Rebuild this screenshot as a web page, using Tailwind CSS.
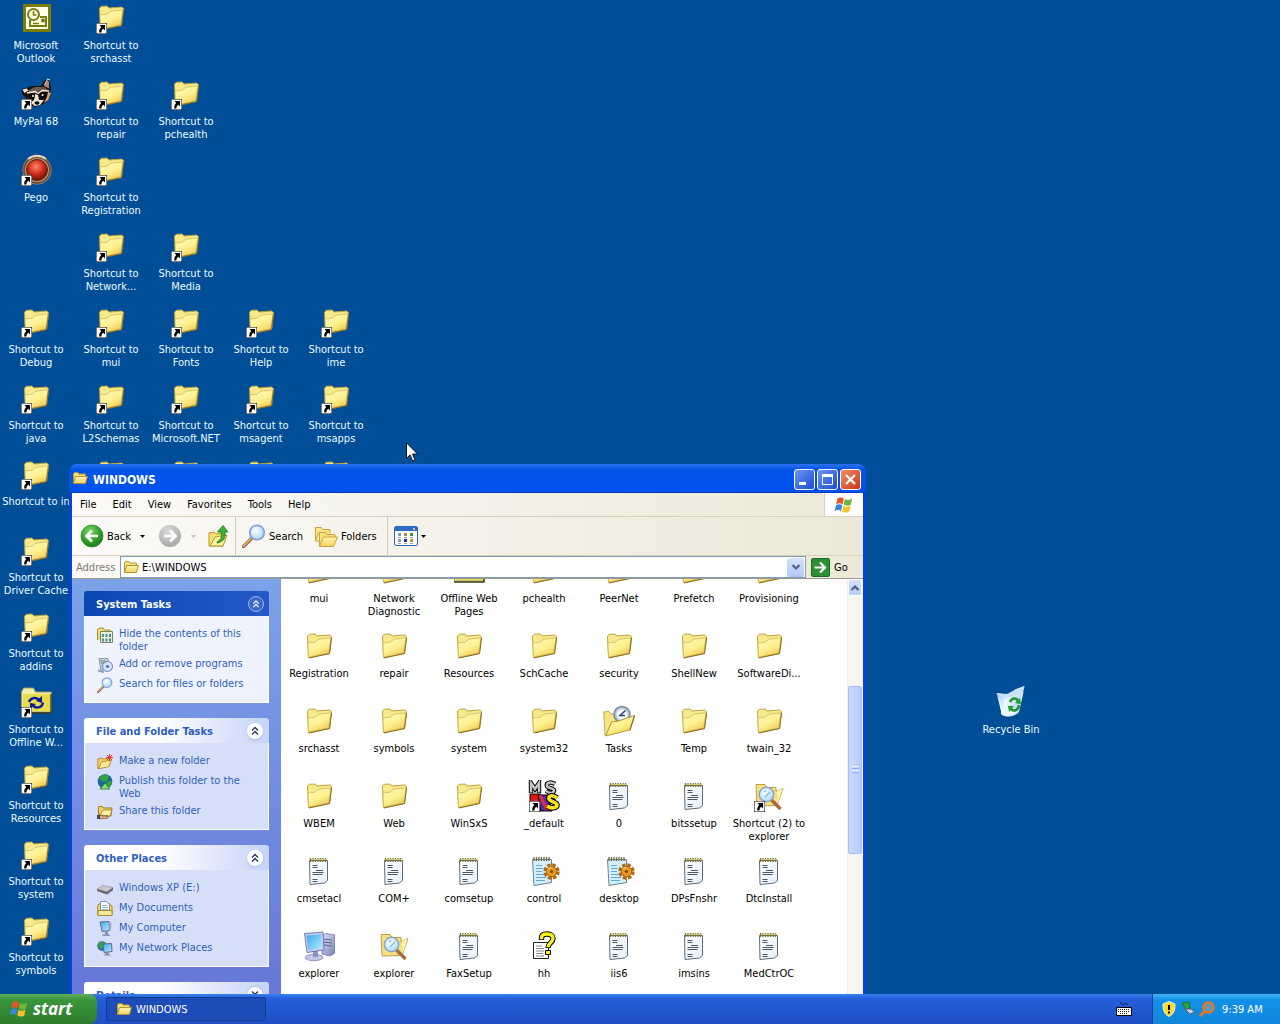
<!DOCTYPE html>
<html lang="en">
<head>
<meta charset="UTF-8">
<meta name="viewport" content="width=device-width, initial-scale=1.0">
<title>WINDOWS</title>
<script src="https://cdn.jsdelivr.net/npm/@tailwindcss/browser@4"></script>
</head>
<body class="h-screen flex flex-col overflow-hidden bg-[#004e98] font-['DejaVu_Sans_Condensed','Noto_Sans',sans-serif] text-[11px] leading-[13px] text-black cursor-default">

<!-- Icon sprite -->
<svg class="absolute size-0" aria-hidden="true">
    <defs>
        <linearGradient id="gFolder" x1="0" y1="0" x2="0.6" y2="1"><stop offset="0" stop-color="#fffcc8"/><stop offset="0.6" stop-color="#fdf08e"/><stop offset="1" stop-color="#f2cc58"/></linearGradient>
        <linearGradient id="gOpen" x1="0" y1="0" x2="0" y2="1"><stop offset="0" stop-color="#fff6b0"/><stop offset="1" stop-color="#f6d064"/></linearGradient>
        <linearGradient id="gScreen" x1="0" y1="0" x2="1" y2="1"><stop offset="0" stop-color="#3fa8f0"/><stop offset="1" stop-color="#b0ecff"/></linearGradient>
        <linearGradient id="gGrey" x1="0" y1="0" x2="1" y2="1"><stop offset="0" stop-color="#dfe2f4"/><stop offset="1" stop-color="#7780b4"/></linearGradient>
        <linearGradient id="gPage" x1="0" y1="0" x2="1" y2="1"><stop offset="0" stop-color="#ffffff"/><stop offset="1" stop-color="#e4eefa"/></linearGradient>
        <linearGradient id="gBin" x1="0" y1="0" x2="1" y2="0.6"><stop offset="0" stop-color="#7db8f0"/><stop offset="0.5" stop-color="#e9f6ff"/><stop offset="1" stop-color="#a9cdf2"/></linearGradient>
        <radialGradient id="gRed" cx="0.45" cy="0.35" r="0.6"><stop offset="0" stop-color="#ff8468"/><stop offset="0.6" stop-color="#cc2c18"/><stop offset="1" stop-color="#7a140c"/></radialGradient>
        <radialGradient id="gGreen" cx="0.4" cy="0.3" r="0.7"><stop offset="0" stop-color="#7ed66c"/><stop offset="0.6" stop-color="#34a42c"/><stop offset="1" stop-color="#1c7a1c"/></radialGradient>
        <radialGradient id="gSilver" cx="0.4" cy="0.3" r="0.7"><stop offset="0" stop-color="#dcdcdc"/><stop offset="1" stop-color="#a8a8a8"/></radialGradient>
        <radialGradient id="gLens" cx="0.4" cy="0.35" r="0.7"><stop offset="0" stop-color="#ffffff"/><stop offset="1" stop-color="#a4d8f8"/></radialGradient>
    </defs>

    <symbol id="folder" viewBox="0 0 32 32">
        <path d="M5.5 27.5 4.5 6 6.5 4.3 12 4 14 6 26.500 5l2 1.600-2 16.800z" fill="#f8ea8c" stroke="#bfa23a"/>
        <path d="M5.500 27.200 5 13 12 12.200 16 9.200 28 7.800 25.800 22.800z" fill="url(#gFolder)" stroke="#cdb24a" stroke-width="0.700"/>
        <path d="M6 28 26.500 23.600 28.600 8" fill="none" stroke="#8a6e24"/>
    </symbol>

    <symbol id="openfolder" viewBox="0 0 16 16">
        <path d="M1.500 13V4l1-1.500H6L7 4h6.500v3.500" fill="#f8e27c" stroke="#b8922c"/>
        <path d="M1.500 13.500 3.600 6.500h11.800l-2 7z" fill="url(#gOpen)" stroke="#b8922c"/>
    </symbol>

    <symbol id="arrow" viewBox="0 0 11 11">
        <path d="M0 0h11v11H0z" fill="#fff" stroke="#000"/>
        <path d="M3.500 2H9v5.500L7.300 5.800C6 6.800 5.500 7.800 5.400 9.500H3.200C3 7 4 5.200 5.300 3.900z" fill="#000"/>
    </symbol>

    <symbol id="notepad" viewBox="0 0 32 32">
        <path d="M6.500 5.500h18v20l-3 2.500L7 29.500z" fill="url(#gPage)" stroke="#5f6c76"/>
        <path d="M7.500 3v4M10 3v4M12.500 3v4M15 3v4M17.500 3v4M20 3v4M22.500 3v4" stroke="#77723a" stroke-width="1.300"/>
        <path d="M8 4.500h16" stroke="#d9c96e"/>
        <path d="M9.500 10.500h5M9.500 12.500h5M13 15.500h7M9.500 17.500h11M9.500 19.500h10M9.500 24.500h5M9.500 26.500h5" stroke="#4d5862"/>
    </symbol>

    <symbol id="config" viewBox="0 0 32 32">
        <path d="M4.500 4.500h19v23L6 30.500z" fill="#d4effc" stroke="#6f8290"/>
        <path d="M6 2v4M8.500 2v4M11 2v4M13.500 2v4M16 2v4M18.500 2v4M21 2v4" stroke="#6e6a40" stroke-width="1.300"/>
        <path d="M8 10.500h6M8 13.500h7M8 16.500h6M8 19.500h8M8 22.500h10M8 25.500h9" stroke="#62a8d8"/>
        <circle cx="23.500" cy="16.500" r="6.200" fill="none" stroke="#b06a10" stroke-width="4" stroke-dasharray="3.200 1.670"/>
        <circle cx="23.500" cy="16.500" r="5.200" fill="#e69a20" stroke="#a86410"/>
        <circle cx="23.500" cy="16.500" r="1.600" fill="#7a4a10"/>
        <path d="M20 14l3-2" stroke="#ffd468" stroke-width="1.500"/>
    </symbol>

    <symbol id="explorer" viewBox="0 0 32 32">
        <path d="M19 6l4-2.500 9 1.500v18l-5 3-8-2z" fill="url(#gGrey)" stroke="#646ca0" stroke-width="0.700"/>
        <path d="M21 9l8 1M21 12l8 1M21 15l8 1" stroke="#5c6498"/>
        <ellipse cx="11" cy="27.500" rx="9" ry="3.200" fill="#c2c8e6" stroke="#7078aa" stroke-width="0.700"/>
        <path d="M10 20h5v7h-5z" fill="#8c94c4"/>
        <path d="M1.500 3.500 20 2l1 18-17 2.500z" fill="#c6cdec" stroke="#5a62a0" stroke-width="0.800"/>
        <path d="M3.500 5.500 18 4.200l.8 14L5.200 20.300z" fill="url(#gScreen)"/>
    </symbol>

    <symbol id="searchfolder" viewBox="0 0 32 32">
        <path d="M4 26 3 4.500h9l2 3h9v4l7-3-6 17z" fill="#f8e080" stroke="#b08c2c" stroke-width="0.800"/>
        <path d="M24 11l5.500-2.300-5 15.300z" fill="#fff6b4"/>
        <path d="m18.500 20 9 9" stroke="#a86c3c" stroke-width="3.400"/>
        <circle cx="13.500" cy="14.500" r="7.200" fill="url(#gLens)" stroke="#8ca4c4" stroke-width="1.500"/>
        <path d="M11 12l2-1.500M12 17l5-5" stroke="#6cb8e8" stroke-width="1.200"/>
    </symbol>

    <symbol id="help" viewBox="0 0 32 32">
        <path d="M5.500 12.500h15v16h-15z" fill="#fff" stroke="#222"/>
        <path d="M8 16h6M8 18.500h8M8 21h8M8 23.500h7M8 26h8" stroke="#888"/>
        <path d="M13.500 10V8c0-3 2-4 5.500-4s6 1.500 6 4.500c0 4-5 4.500-5 9.500" fill="none" stroke="#000" stroke-width="5.400"/>
        <path d="M13.500 9.200V8c0-3 2-4 5.500-4s6 1.500 6 4.500c0 4-5 4.500-5 8.700" fill="none" stroke="#f8f020" stroke-width="3.400"/>
        <path d="M17.500 20.500h5v4h-5z" fill="#f8f020" stroke="#000"/>
    </symbol>

    <symbol id="tasks" viewBox="0 0 32 32">
        <path d="M2 30 .8 7l5-.8 2 2.500 10 2v10z" fill="#f8e484" stroke="#b8982c" stroke-width="0.800"/>
        <circle cx="19" cy="9.500" r="8" fill="#b4c8d8" stroke="#74889c" stroke-width="1.500"/>
        <circle cx="19" cy="9.500" r="5.500" fill="#f4faff"/>
        <path d="m22.500 5.500-5.500 5h5" fill="none" stroke="#304860" stroke-width="1.500"/>
        <path d="M2.500 31 8.500 17l7-1 16-5.500-5 14.500z" fill="url(#gFolder)" stroke="#b08c2c" stroke-width="0.900"/>
        <path d="m27 25.500 4.500-14.500" stroke="#7c6420"/>
    </symbol>

    <symbol id="offline" viewBox="0 0 32 32">
        <path d="M1.500 26V6l2-4h10l2 4h16v20z" fill="#f0ecb0" stroke="#9c9850"/>
        <path d="M31 8v19H1" fill="none" stroke="#3a3a10" stroke-width="1.400"/>
        <path d="M3 8h27v17H3z" fill="#e8dc4c"/>
        <path d="M9 16c2-5 8-5 10-2M23 16.500c-1 6-8 6-10 3" fill="none" stroke="#0c1c9c" stroke-width="2.400"/>
        <path d="m16 15 6 2v-7zM16 18l-6-1v6z" fill="#0c1c9c"/>
    </symbol>

    <symbol id="default" viewBox="0 0 32 32">
        <path d="M3 13V3l4 6 4-6v10" fill="none" stroke="#000" stroke-width="4.400"/>
        <path d="M3 12.500V3l4 6 4-6v9.500" fill="none" stroke="#c4c4c4" stroke-width="2.400"/>
        <path d="M27 4c-5-3-9-1-8 2s8 2 7 5-5 2-8 0" fill="none" stroke="#000" stroke-width="4.400"/>
        <path d="M27 4c-5-3-9-1-8 2s8 2 7 5-5 2-8 0" fill="none" stroke="#c4c4c4" stroke-width="2.400"/>
        <path d="M2 14h11v17H2z" fill="#d81c1c" stroke="#000"/>
        <path d="M10 15h10l4 16H13z" fill="#5a28b4" stroke="#000"/>
        <path d="M12 15l7 15" stroke="#e03030" stroke-width="3"/>
        <path d="M29 18c-5-4-9-2-8 1s8 3 8 6-6 4-10 1" fill="none" stroke="#000" stroke-width="5.600"/>
        <path d="M29 18c-5-4-9-2-8 1s8 3 8 6-6 4-10 1" fill="none" stroke="#f8e01c" stroke-width="3.600"/>
    </symbol>

    <symbol id="outlook" viewBox="0 0 32 32">
        <path d="M3 2h28v28H3z" fill="#7c7c08"/>
        <path d="M6 5h22v22H6z" fill="#fffff0"/>
        <circle cx="13.500" cy="12.500" r="5.500" fill="#fffff0" stroke="#7c7c08" stroke-width="2"/>
        <path d="M13.500 9v4h3" fill="none" stroke="#7c7c08" stroke-width="1.600"/>
        <path d="M10 18v6h16v-9h-6" fill="none" stroke="#7c7c08" stroke-width="2"/>
        <path d="M13 21.500h6M22 17.500h2v2h-2z" stroke="#7c7c08" stroke-width="1.600"/>
    </symbol>

    <symbol id="raccoon" viewBox="0 0 32 32">
        <path d="M2 11l4-1 6-2 9 0 4-6 4-1 2 9-1 9-6 7-9 3-8-4-2-6-3-3z" fill="#1c1410"/>
        <path d="M24 8l3-5.500 2 1 0 7z" fill="#a8887c"/>
        <path d="M24.500 7l3-6 2.500 1" fill="none" stroke="#f0dccc"/>
        <path d="M2.500 11.500l4-1 2 2-4 2.500z" fill="#f0e0d0"/>
        <path d="M9 12l6-3 9 0 4 3-7 0-5 3-7 0z" fill="#6c5c50"/>
        <path d="M7 15l8-1.500 3 2 4-3 7 .5" fill="none" stroke="#f4ece4" stroke-width="1.400"/>
        <path d="M15 16l3 1 1 5 5 0-4 5-5 1-4-3 3-4z" fill="#ece4dc"/>
        <path d="M9 16l6 1-1 5-4 2zM20 15l7-1-1 6-5 1z" fill="#0c0808"/>
        <circle cx="13" cy="18" r="1" fill="#fff"/><circle cx="22.500" cy="17" r="1" fill="#fff"/>
        <ellipse cx="17" cy="25" rx="2.500" ry="1.800" fill="#0c0808"/>
        <path d="M28 14l3 1-3 7-4 3 3-6z" fill="#e8a868"/>
    </symbol>

    <symbol id="pego" viewBox="0 0 32 32">
        <circle cx="17" cy="16" r="14.500" fill="#c49872"/>
        <circle cx="17" cy="16" r="13" fill="none" stroke="#6c5040" stroke-width="2"/>
        <path d="M8 5a14 14 0 0 1 18 0" fill="none" stroke="#f2d8b8" stroke-width="2"/>
        <circle cx="17" cy="16" r="10.500" fill="url(#gRed)" stroke="#5a1c10"/>
    </symbol>

    <symbol id="bin" viewBox="0 0 32 32">
        <path d="M1.500 7 12 9l9-6 8.500-3-5.500 26c-4 5-12 6-17 3z" fill="url(#gBin)"/>
        <path d="M1.500 7 12 8l8-4 9.500-4-2 5-9 6-10 1z" fill="#c8e2fa"/>
        <path d="M4 12l3 15M10 13l1 8M28 6l-4 18" stroke="#fff" stroke-opacity="0.700"/>
        <path d="M6 26c4-5 14-6 18-2-3 6-13 8-18 4z" fill="#eaf7ff"/>
        <path d="M15 16c2-5 7-4 8-1M24 19c0 5-5 7-8 4" fill="none" stroke="#1e9a28" stroke-width="2.600"/>
        <path d="m20 17 6 1-1-6zM19 20l-6 0 1 6z" fill="#1e9a28"/>
    </symbol>

    <symbol id="flag" viewBox="0 0 20 20">
        <path d="M3.500 3.500C6 2 8 2.300 9.800 3.500L8.600 9.200C6.500 8 4.500 8 2.200 9.300z" fill="#e8542c"/>
        <path d="M10.800 4c2.200 1.200 4.700 1.200 7.400-.2L16.800 9.700c-2.500 1.300-4.900 1.200-7-.1z" fill="#72b43c"/>
        <path d="M2 10.300c2.200-1.300 4.200-1.200 6.300-.1L7 15.900c-2-1.100-4-1.200-6.400.1z" fill="#3c84d8"/>
        <path d="M9.500 10.800c2.200 1.200 4.500 1.200 7 0l-1.300 5.900c-2.500 1.200-4.900 1.200-7-.1z" fill="#f6c22c"/>
    </symbol>

    <symbol id="magnifier" viewBox="0 0 24 24">
        <path d="m9.500 14.500-8 8" stroke="#8a6858" stroke-width="3.600" stroke-linecap="round"/>
        <path d="m9 14.500-7.500 7.500" stroke="#e8a868" stroke-width="1.800" stroke-linecap="round"/>
        <circle cx="15" cy="8.500" r="7.200" fill="url(#gLens)" stroke="#8ca0e0" stroke-width="1.800"/>
    </symbol>

    <symbol id="up" viewBox="0 0 24 24">
        <path d="M2 22V9l5-1 2 2 8-1-1 13z" fill="#f6e070" stroke="#b49828"/>
        <path d="m3 22 5-9 12-2-4 11z" fill="#fff2a0" stroke="#b49828"/>
        <path d="M10 18c5-3 5-6 4-10h-3.500L16 1.500 21 8h-3c1 6-2 10-8 11z" fill="#3cb034" stroke="#187818" stroke-width="0.800"/>
    </symbol>

    <symbol id="folders" viewBox="0 0 24 24">
        <path d="M1.500 17V3.500h6l1.500 2h7V9" fill="#f8e684" stroke="#c8a440"/>
        <path d="m1.500 17 3-8.500h1v8.500z" fill="#fff0a0" stroke="#c8a440"/>
        <path d="M5.500 22.500V8.500h6l1.500 2h8V13" fill="#f8e07c" stroke="#c8a440"/>
        <path d="m5.500 22.500 4-9.500h14l-4 9.500z" fill="url(#gOpen)" stroke="#c8a440"/>
    </symbol>

    <symbol id="views" viewBox="0 0 24 20">
        <rect x="0.500" y="0.500" width="23" height="19" rx="1.500" fill="#fff" stroke="#2c68b8"/>
        <path d="M1 1h22v4H1z" fill="#2c6cc8"/><path d="M19 2h2v2h-2z" fill="#f4b0a0"/>
        <path d="M4 7h3v3H4zM4 13h3v3H4z" fill="#8c9cb8"/>
        <path d="M10 7h3v3h-3z" fill="#a08858"/><path d="M10 13h3v3h-3z" fill="#18389c"/>
        <path d="M16 7h3v3h-3z" fill="#389c38"/><path d="M16 13h3v3h-3z" fill="#c89038"/>
        <path d="M4 11.500h3M4 17.500h3M10 11.500h3M10 17.500h3M16 11.500h3M16 17.500h3" stroke="#666" stroke-width="0.600"/>
    </symbol>

    <symbol id="chevron" viewBox="0 0 16 16">
        <path d="m5 7.500 3-3 3 3M5 11.500l3-3 3 3" fill="none" stroke="currentColor" stroke-width="1.400"/>
    </symbol>
    <symbol id="caret" viewBox="0 0 5 3"><path d="M0 0h5L2.500 3z" fill="currentColor"/></symbol>

    <symbol id="s-hide" viewBox="0 0 16 16">
        <path d="M.5 13V2.500L2 1h4l1.500 2H13v9" fill="#f4dc74" stroke="#a88830"/>
        <path d="M3.500 4.500h12v11h-12z" fill="#e8eed8" stroke="#788468"/>
        <path d="M5 7h2v3H5zM8.500 7h2v3h-2zM12 7h2v3h-2zM5 11.500h2v3H5zM8.500 11.500h2v3h-2zM12 11.500h2v3h-2z" fill="#4c8c94"/>
    </symbol>
    <symbol id="s-programs" viewBox="0 0 16 16">
        <path d="M2 1.500h9l1 10-8 2z" fill="#c8d4e8" stroke="#7484a0" stroke-width="0.800"/>
        <path d="M3 3h6v4H4z" fill="#8cb4a4"/>
        <circle cx="10.500" cy="9.500" r="5" fill="#d8e4fc" stroke="#6880b8"/>
        <circle cx="10.500" cy="9.500" r="1.600" fill="#5870b0"/>
        <path d="M1 13.500l6 1.500" stroke="#98a0b0" stroke-width="2"/>
    </symbol>
    <symbol id="s-new" viewBox="0 0 16 16">
        <path d="M.8 14.500V5l4-1 2 1 6-1v7z" fill="#f4d060" stroke="#a87c20" stroke-width="0.800"/>
        <path d="m1.500 14.800 3-7 10-1.500-3 6.500z" fill="#ffe898" stroke="#a87c20" stroke-width="0.800"/>
        <path d="M12.500 0v7M9 3.500h7M10 1l5 5M15 1l-5 5" stroke="#e83820"/>
    </symbol>
    <symbol id="s-web" viewBox="0 0 16 16">
        <circle cx="8" cy="7.500" r="7.300" fill="#1c64a4"/>
        <path d="M2 4c3-4 8-4 10-1l-2 4-4 1zM9 9l5-3 1 4-4 4z" fill="#34a438"/>
        <path d="m3 15 5-6 5 6z" fill="#8ce070" stroke="#1c6c28" stroke-width="0.800"/>
    </symbol>
    <symbol id="s-share" viewBox="0 0 16 16">
        <path d="M1.500 10.500v-8h4l1 1.500h8.500l-1 8z" fill="#f4d468" stroke="#a07c28"/>
        <path d="m3 11 3-5h9l-2 6z" fill="#fff0a8" stroke="#a07c28" stroke-width="0.800"/>
        <path d="M0 12c3-2 5 1 11 0v2c-5 1-8 1-11 0z" fill="#e4b484" stroke="#6c4c28" stroke-width="0.700"/>
        <path d="M0 11h3v4H0z" fill="#384868"/>
    </symbol>
    <symbol id="s-drive" viewBox="0 0 16 16">
        <path d="m0 8 6-3.500 10 2-6 4.500z" fill="#c8c8cc" stroke="#888890" stroke-width="0.600"/>
        <path d="m0 8 10 3v2.500L0 10zM10 11l6-4.500V9l-6 4.500z" fill="#66666e"/>
    </symbol>
    <symbol id="s-docs" viewBox="0 0 16 16">
        <path d="M.8 14V4L3 2.500h9L15 5v9z" fill="#f4d868" stroke="#a88830"/>
        <path d="M3.500.5h6l3 3V10h-9z" fill="#fff" stroke="#7890b8"/>
        <path d="M5 4.500h5M5 6.500h6M5 8.500h6" stroke="#98b0d8"/>
        <path d="M1 9.500h14v5H1z" fill="#fae890" stroke="#a88830"/>
    </symbol>
    <symbol id="s-computer" viewBox="0 0 16 16">
        <path d="M3 1l9-.5.8 9-7.600 1z" fill="url(#gScreen)" stroke="#606890"/>
        <path d="M12.500 1l2 1-.5 7-1.500 1z" fill="#a4acc8"/>
        <path d="M8 10.500h3V13H8zM5 13.500l7-.5 1 2H6z" fill="#888fb4"/>
    </symbol>
    <symbol id="s-network" viewBox="0 0 16 16">
        <circle cx="5" cy="5" r="4.800" fill="#2c70b0"/>
        <path d="M1 4c2-4 5-3 7-2L6 6 3 8z" fill="#3ca43c"/>
        <path d="M6 3l8.500-.5.500 8-8 1z" fill="url(#gScreen)" stroke="#606890"/>
        <path d="M9 11.500h3V13l2 1.500H7z" fill="#888fb4"/>
    </symbol>
</svg>

<main class="relative flex-1 min-h-0 overflow-hidden">
    <!-- Desktop icons -->
    <div id="desktop" class="grid w-max -ml-px pt-[2px] grid-cols-[repeat(5,74px)] auto-rows-[76px] gap-x-px text-[#ecfcff]"></div>

    <button class="absolute left-[974px] top-[686px] w-[74px] flex flex-col items-center gap-[5px] text-[#ecfcff]">
        <svg class="size-8"><use href="#bin"/></svg>
        <span>Recycle Bin</span>
    </button>

    <!-- Explorer window -->
    <section aria-label="WINDOWS" class="absolute left-[69px] top-[464px] bottom-0 w-[797px] flex flex-col rounded-t-lg overflow-hidden bg-[#0a3fd8] px-[3px]">
        <header class="-mx-[3px] h-[29px] shrink-0 flex items-center pl-[3px] pr-[5px] bg-linear-to-b from-[#2b72f0] via-[#0054e6] via-20% to-[#0351f0] border-b border-[#0338b8]">
            <svg class="size-4"><use href="#openfolder"/></svg>
            <h1 class="ml-[5px] mt-1 grow font-bold text-[12px] leading-4 text-white">WINDOWS</h1>
            <div class="flex gap-[2px] mt-[2px]">
                <button aria-label="Minimize" class="size-[21px] rounded-[3px] border border-white bg-linear-to-br from-[#6c96f4] to-[#1c48d0]"><svg class="size-full" viewBox="0 0 19 19"><path d="M4 12h7v3H4z" fill="#fff"/></svg></button>
                <button aria-label="Maximize" class="size-[21px] rounded-[3px] border border-white bg-linear-to-br from-[#6c96f4] to-[#1c48d0]"><svg class="size-full" viewBox="0 0 19 19"><path d="M4.500 5.500h10v9h-10z" fill="none" stroke="#fff"/><path d="M4 4h11v3H4z" fill="#fff"/></svg></button>
                <button aria-label="Close" class="size-[21px] rounded-[3px] border border-white bg-linear-to-br from-[#f08c6c] to-[#c8320c]"><svg class="size-full" viewBox="0 0 19 19"><path d="m5 5 9 9M14 5l-9 9" stroke="#fff" stroke-width="2.200"/></svg></button>
            </div>
        </header>

        <nav class="h-[24px] shrink-0 flex items-stretch bg-linear-to-r from-[#fbfaf8] to-[#ece9d8] border-b border-[#d8d2bd]">
            <div class="grow flex items-center gap-4 pl-2">
                <button>File</button>
                <button>Edit</button>
                <button>View</button>
                <button>Favorites</button>
                <button>Tools</button>
                <button>Help</button>
            </div>
            <div class="w-[39px] flex items-center justify-center bg-white border-l border-[#d8d2bd]">
                <svg class="size-5"><use href="#flag"/></svg>
            </div>
        </nav>

        <div class="h-[39px] shrink-0 flex items-center bg-linear-to-r from-[#fbfaf8] to-[#ece9d8] border-b border-[#d8d2bd] pl-2">
            <button class="w-[60px] flex items-center gap-[3px]">
                <svg class="size-6" viewBox="0 0 24 24"><circle cx="12" cy="12" r="11" fill="url(#gGreen)" stroke="#2c8a2c" stroke-width="0.800"/><path d="M18 12H7M12 6.500 6.500 12l5.500 5.500" fill="none" stroke="#fff" stroke-width="2.600"/></svg>
                <span>Back</span>
            </button>
            <button aria-label="Back history" class="w-[18px] flex"><svg class="w-[5px] h-[3px]"><use href="#caret"/></svg></button>
            <button aria-label="Forward" class="w-[33px] flex"><svg class="size-6" viewBox="0 0 24 24"><circle cx="12" cy="12" r="11" fill="url(#gSilver)"/><path d="M6 12h11M12 6.500l5.500 5.500-5.500 5.500" fill="none" stroke="#fff" stroke-width="2.600"/></svg></button>
            <button aria-label="Forward history" class="w-4 flex text-[#c4c0b8]"><svg class="w-[5px] h-[3px]"><use href="#caret"/></svg></button>
            <button aria-label="Up" class="w-[28px] flex"><svg class="size-6"><use href="#up"/></svg></button>
            <div class="w-px self-stretch bg-[#cdc8b6]"></div>
            <button class="w-[78px] pl-[6px] flex items-center gap-[3px]"><svg class="size-6"><use href="#magnifier"/></svg><span>Search</span></button>
            <button class="w-[73px] flex items-center gap-[3px]"><svg class="size-6"><use href="#folders"/></svg><span>Folders</span></button>
            <div class="w-px self-stretch bg-[#cdc8b6]"></div>
            <button aria-label="Views" class="ml-[6px] flex items-center gap-[3px]"><svg class="w-6 h-5"><use href="#views"/></svg><svg class="w-[5px] h-[3px]"><use href="#caret"/></svg></button>
        </div>

        <div class="h-[23px] shrink-0 flex items-center bg-linear-to-r from-[#fbfaf8] to-[#ece9d8] border-b border-[#9c9a8c] pl-1">
            <label for="address" class="w-[44px] text-[#7d7b74]">Address</label>
            <div class="w-[686px] h-full flex items-center border border-[#7f9db9] bg-white pl-[2px] pr-px">
                <svg class="size-4 shrink-0"><use href="#openfolder"/></svg>
                <input id="address" type="text" value="E:\WINDOWS" class="grow ml-[3px] pt-px outline-none">
                <button aria-label="Show addresses" class="w-[17px] h-[19px] flex items-center justify-center rounded-[2px] bg-linear-to-b from-[#d6e2fd] to-[#b4c8f6]">
                    <svg class="size-[10px]" viewBox="0 0 10 10"><path d="m1.500 3 3.500 3.500L8.500 3" fill="none" stroke="#4d6185" stroke-width="2.200"/></svg>
                </button>
            </div>
            <button class="ml-[5px] flex items-center gap-1">
                <svg class="size-[19px]" viewBox="0 0 19 19"><rect x="0.500" y="0.500" width="18" height="18" rx="1.500" fill="#2c9034" stroke="#1c6c24"/><path d="M3.500 9.500h10M9 4.500l5 5-5 5" fill="none" stroke="#fff" stroke-width="2.200"/></svg>
                <span>Go</span>
            </button>
        </div>

        <div class="flex grow min-h-0 overflow-hidden bg-white">
            <!-- Task pane -->
            <aside class="w-[209px] shrink-0 overflow-hidden flex flex-col gap-[15px] px-3 pt-3 bg-linear-to-b from-[#7ca2e8] to-[#6778d8] text-[#2f5fbe]">
                <section class="shrink-0">
                    <h2><button class="w-full h-[25px] flex items-center justify-between rounded-t-[3px] pl-3 pr-[5px] font-bold text-white bg-linear-to-r from-[#0b48b0] to-[#2359c8]">
                        <span class="pt-[2px]">System Tasks</span>
                        <svg class="size-4 rounded-full border border-[#9cb8f0] bg-[#3a68cc]"><use href="#chevron"/></svg>
                    </button></h2>
                    <ul class="flex flex-col gap-1 bg-[#eff3ff] border border-t-0 border-white px-3 pt-[11px] pb-[9px]">
                        <li><a href="#" class="flex gap-[6px] min-h-4"><svg class="size-4 shrink-0"><use href="#s-hide"/></svg>Hide the contents of this folder</a></li>
                        <li><a href="#" class="flex gap-[6px] min-h-4"><svg class="size-4 shrink-0"><use href="#s-programs"/></svg>Add or remove programs</a></li>
                        <li><a href="#" class="flex gap-[6px] min-h-4"><svg class="size-4 shrink-0"><use href="#magnifier"/></svg>Search for files or folders</a></li>
                    </ul>
                </section>
                <section class="shrink-0">
                    <h2><button class="w-full h-[25px] flex items-center justify-between rounded-t-[3px] pl-3 pr-[6px] font-bold bg-linear-to-r from-white from-40% to-[#c6d3f7]">
                        <span class="pt-[2px]">File and Folder Tasks</span>
                        <svg class="size-4 rounded-full bg-white text-[#26345c] shadow-sm"><use href="#chevron"/></svg>
                    </button></h2>
                    <ul class="flex flex-col gap-1 bg-[#d6dff7] border border-t-0 border-white px-3 pt-[11px] pb-[9px]">
                        <li><a href="#" class="flex gap-[6px] min-h-4"><svg class="size-4 shrink-0"><use href="#s-new"/></svg>Make a new folder</a></li>
                        <li><a href="#" class="flex gap-[6px] min-h-4"><svg class="size-4 shrink-0"><use href="#s-web"/></svg>Publish this folder to the Web</a></li>
                        <li><a href="#" class="flex gap-[6px] min-h-4"><svg class="size-4 shrink-0"><use href="#s-share"/></svg>Share this folder</a></li>
                    </ul>
                </section>
                <section class="shrink-0">
                    <h2><button class="w-full h-[25px] flex items-center justify-between rounded-t-[3px] pl-3 pr-[6px] font-bold bg-linear-to-r from-white from-40% to-[#c6d3f7]">
                        <span class="pt-[2px]">Other Places</span>
                        <svg class="size-4 rounded-full bg-white text-[#26345c] shadow-sm"><use href="#chevron"/></svg>
                    </button></h2>
                    <ul class="flex flex-col gap-1 bg-[#d6dff7] border border-t-0 border-white px-3 pt-[11px] pb-[9px]">
                        <li><a href="#" class="flex gap-[6px] min-h-4"><svg class="size-4 shrink-0"><use href="#s-drive"/></svg>Windows XP (E:)</a></li>
                        <li><a href="#" class="flex gap-[6px] min-h-4"><svg class="size-4 shrink-0"><use href="#s-docs"/></svg>My Documents</a></li>
                        <li><a href="#" class="flex gap-[6px] min-h-4"><svg class="size-4 shrink-0"><use href="#s-computer"/></svg>My Computer</a></li>
                        <li><a href="#" class="flex gap-[6px] min-h-4"><svg class="size-4 shrink-0"><use href="#s-network"/></svg>My Network Places</a></li>
                    </ul>
                </section>
                <section class="shrink-0">
                    <h2><button class="w-full h-[25px] flex items-center justify-between rounded-t-[3px] pl-3 pr-[6px] font-bold bg-linear-to-r from-white from-40% to-[#c6d3f7]">
                        <span class="pt-[2px]">Details</span>
                        <svg class="size-4 rounded-full bg-white text-[#26345c] shadow-sm rotate-180"><use href="#chevron"/></svg>
                    </button></h2>
                </section>
            </aside>

            <!-- Folder contents, scrolled part of the way into a row -->
            <div class="grow min-w-0 overflow-hidden">
                <div id="files" class="-mt-6 ml-px grid grid-cols-[repeat(7,74px)] auto-rows-[75px] gap-x-px"></div>
            </div>

            <div class="w-4 shrink-0 flex flex-col bg-[#f6f5f0] border-l border-[#eeede5] pr-px">
                <button aria-label="Scroll up" class="h-[17px] shrink-0 flex items-center justify-center rounded-[2px] border border-white bg-linear-to-b from-[#d6e2fd] to-[#b9ccf8]">
                    <svg class="size-[10px]" viewBox="0 0 10 10"><path d="m1.500 7 3.500-3.500L8.500 7" fill="none" stroke="#4d6185" stroke-width="2.200"/></svg>
                </button>
                <div class="grow-90 basis-0"></div>
                <div class="grow-167 basis-0 flex flex-col items-center justify-center gap-px rounded-[2px] border border-[#a8bdf0] bg-linear-to-r from-[#cbdafd] to-[#b6c9f8]">
                    <i class="w-[7px] h-px bg-[#eef4fe]"></i>
                    <i class="w-[7px] h-px bg-[#8cb0f8]"></i>
                    <i class="w-[7px] h-px bg-[#eef4fe]"></i>
                    <i class="w-[7px] h-px bg-[#8cb0f8]"></i>
                </div>
                <div class="grow-141 basis-0"></div>
            </div>
        </div>
    </section>

    <!-- Mouse pointer -->
    <svg class="absolute left-[406px] top-[442px] w-3 h-5" viewBox="0 0 12 20"><path d="M.5.800v15.500l3.600-3.400 2.600 6 2.300-1-2.500-5.800h5z" fill="#fff" stroke="#000" stroke-width="0.900"/></svg>
</main>

<!-- Taskbar -->
<footer class="h-[30px] shrink-0 flex items-stretch text-white bg-linear-to-b from-[#3a80f0] via-[#245edb] via-15% to-[#1f50c4]">
    <button class="w-[97px] flex items-center pl-[9px] gap-1 rounded-r-lg bg-linear-to-b from-[#5cb05c] via-[#3a963a] via-20% to-[#2c7c2c]">
        <svg class="size-5"><use href="#flag"/></svg>
        <span class="font-['Open_Sans',sans-serif] font-bold italic text-[17px] leading-5">start</span>
    </button>
    <button class="ml-[9px] my-[3px] w-[160px] flex items-center gap-1 rounded-[2px] pl-[9px] border border-[#153c94] bg-[#1b4cb8]">
        <svg class="size-4"><use href="#openfolder"/></svg>
        <span>WINDOWS</span>
    </button>
    <div class="grow"></div>
    <button aria-label="Keyboard layout" class="w-9 flex pt-2">
        <svg class="size-4" viewBox="0 0 16 16"><path d="M4 0l3 3 3-2 2 2" fill="none" stroke="#0c1c50"/><path d="M.5 5.500h15v8H.5z" fill="#fff" stroke="#000"/><path d="M2 7.500h12M2 9.500h12M4 11.500h8" stroke="#222" stroke-dasharray="1 1"/></svg>
    </button>
    <div class="w-[128px] flex items-center pl-2 gap-[3px] border-l border-[#0e3fa0] bg-linear-to-b from-[#3cb4f4] via-[#1290e8] via-20% to-[#1186dc]">
        <svg class="size-4" viewBox="0 0 16 16"><path d="M8 .5 14 3c0 6-1 10-6 12.500C3 13 2 9 2 3z" fill="#f8dc28" stroke="#f0f4d0"/><path d="M8 4v5M8 10.500v2" stroke="#000" stroke-width="2"/></svg>
        <svg class="size-4" viewBox="0 0 16 16"><path d="m2 2 7-1 1 6-4 2z" fill="#2ca43c" stroke="#187028"/><path d="m5 8 5 5 5-2-4-3z" fill="#c8d0d8" stroke="#506070"/></svg>
        <svg class="size-4" viewBox="0 0 16 16"><circle cx="9.500" cy="6.500" r="5" fill="#38a4e8" stroke="#e8781c" stroke-width="2.600"/><circle cx="9.500" cy="6.500" r="1.500" fill="#e8781c"/><path d="m6 10-5 5" stroke="#e8781c" stroke-width="2.800"/></svg>
        <time class="ml-1">9:39 AM</time>
    </div>
</footer>

<script>
// [column, row, icon, label, is a shortcut]
const desktopIcons = [
    [1, 1, 'outlook', 'Microsoft Outlook', false],
    [2, 1, 'folder', 'Shortcut to srchasst', true],
    [1, 2, 'raccoon', 'MyPal 68', true],
    [2, 2, 'folder', 'Shortcut to repair', true],
    [3, 2, 'folder', 'Shortcut to pchealth', true],
    [1, 3, 'pego', 'Pego', true],
    [2, 3, 'folder', 'Shortcut to Registration', true],
    [2, 4, 'folder', 'Shortcut to Network...', true],
    [3, 4, 'folder', 'Shortcut to Media', true],
    [1, 5, 'folder', 'Shortcut to Debug', true],
    [2, 5, 'folder', 'Shortcut to<br>mui', true],
    [3, 5, 'folder', 'Shortcut to Fonts', true],
    [4, 5, 'folder', 'Shortcut to Help', true],
    [5, 5, 'folder', 'Shortcut to<br>ime', true],
    [1, 6, 'folder', 'Shortcut to java', true],
    [2, 6, 'folder', 'Shortcut to L2Schemas', true],
    [3, 6, 'folder', 'Shortcut to Microsoft.NET', true],
    [4, 6, 'folder', 'Shortcut to msagent', true],
    [5, 6, 'folder', 'Shortcut to msapps', true],
    [1, 7, 'folder', 'Shortcut to in', true],
    [2, 7, 'folder', '', true],
    [3, 7, 'folder', '', true],
    [4, 7, 'folder', '', true],
    [5, 7, 'folder', '', true],
    [1, 8, 'folder', 'Shortcut to<br>Driver Cache', true],
    [1, 9, 'folder', 'Shortcut to addins', true],
    [1, 10, 'offline', 'Shortcut to<br>Offline W...', true],
    [1, 11, 'folder', 'Shortcut to Resources', true],
    [1, 12, 'folder', 'Shortcut to system', true],
    [1, 13, 'folder', 'Shortcut to symbols', true],
];

const files = [
    ['folder', 'mui'], ['folder', 'Network Diagnostic'], ['offline', 'Offline Web Pages'], ['folder', 'pchealth'], ['folder', 'PeerNet'], ['folder', 'Prefetch'], ['folder', 'Provisioning'],
    ['folder', 'Registration'], ['folder', 'repair'], ['folder', 'Resources'], ['folder', 'SchCache'], ['folder', 'security'], ['folder', 'ShellNew'], ['folder', 'SoftwareDi...'],
    ['folder', 'srchasst'], ['folder', 'symbols'], ['folder', 'system'], ['folder', 'system32'], ['tasks', 'Tasks'], ['folder', 'Temp'], ['folder', 'twain_32'],
    ['folder', 'WBEM'], ['folder', 'Web'], ['folder', 'WinSxS'], ['default', '_default', true], ['notepad', '0'], ['notepad', 'bitssetup'], ['searchfolder', 'Shortcut (2) to explorer', true],
    ['notepad', 'cmsetacl'], ['notepad', 'COM+'], ['notepad', 'comsetup'], ['config', 'control'], ['config', 'desktop'], ['notepad', 'DPsFnshr'], ['notepad', 'DtcInstall'],
    ['explorer', 'explorer'], ['searchfolder', 'explorer'], ['notepad', 'FaxSetup'], ['help', 'hh'], ['notepad', 'iis6'], ['notepad', 'imsins'], ['notepad', 'MedCtrOC'],
];

function iconHtml(icon, label, shortcut, place) {
    const badge = shortcut ? '<svg class="absolute left-px bottom-0 size-[11px] overflow-visible"><use href="#arrow"/></svg>' : '';
    return `<button class="flex flex-col items-center gap-[5px] self-start" style="${place}">
        <span class="relative size-8"><svg class="size-8"><use href="#${icon}"/></svg>${badge}</span>
        <span class="w-full text-center">${label}</span>
    </button>`;
}

document.getElementById('desktop').innerHTML = desktopIcons
    .map(([col, row, icon, label, shortcut]) => iconHtml(icon, label, shortcut, `grid-area: ${row} / ${col}`))
    .join('');

document.getElementById('files').innerHTML = files
    .map(([icon, label, shortcut]) => iconHtml(icon, label, shortcut, ''))
    .join('');
</script>
</body>
</html>
